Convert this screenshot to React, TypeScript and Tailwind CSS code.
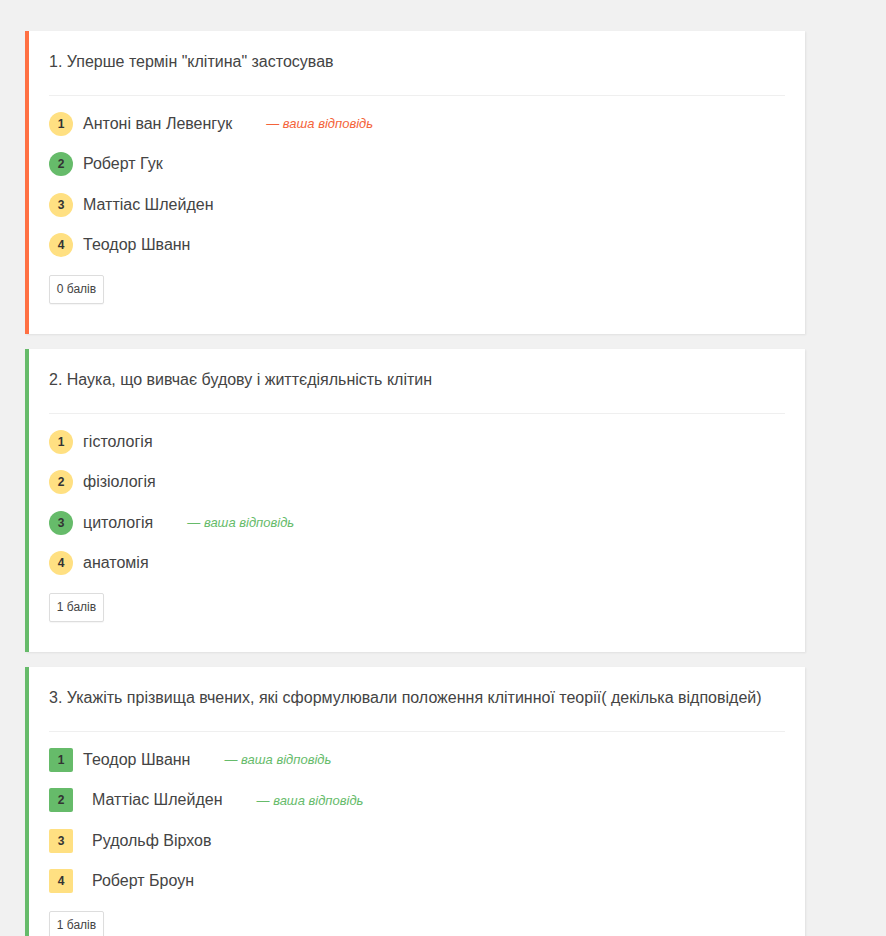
type Mark = 'correct' | 'plain';

interface Option {
  text: string;
  mark: Mark;
  chosen?: boolean;
  indent?: boolean;
}

interface Question {
  title: string;
  status: 'wrong' | 'right';
  shape: 'circle' | 'square';
  options: Option[];
  score: string;
}

const questions: Question[] = [
  {
    title: '1. Уперше термін "клітина" застосував',
    status: 'wrong',
    shape: 'circle',
    score: '0 балів',
    options: [
      { text: 'Антоні ван Левенгук', mark: 'plain', chosen: true },
      { text: 'Роберт Гук', mark: 'correct' },
      { text: 'Маттіас Шлейден', mark: 'plain' },
      { text: 'Теодор Шванн', mark: 'plain' },
    ],
  },
  {
    title: '2. Наука, що вивчає будову і життєдіяльність клітин',
    status: 'right',
    shape: 'circle',
    score: '1 балів',
    options: [
      { text: 'гістологія', mark: 'plain' },
      { text: 'фізіологія', mark: 'plain' },
      { text: 'цитологія', mark: 'correct', chosen: true },
      { text: 'анатомія', mark: 'plain' },
    ],
  },
  {
    title: '3. Укажіть прізвища вчених, які сформулювали положення клітинної теорії( декілька відповідей)',
    status: 'right',
    shape: 'square',
    score: '1 балів',
    options: [
      { text: 'Теодор Шванн', mark: 'correct', chosen: true },
      { text: 'Маттіас Шлейден', mark: 'correct', chosen: true, indent: true },
      { text: 'Рудольф Вірхов', mark: 'plain', indent: true },
      { text: 'Роберт Броун', mark: 'plain', indent: true },
    ],
  },
];

function QuestionCard({ q }: { q: Question }) {
  const wrong = q.status === 'wrong';
  return (
    <div
      className={`w-[780px] bg-white border-l-4 shadow-[1px_1px_2px_rgba(0,0,0,0.07)] pl-5 pr-5 pt-[20px] pb-[30px] ${
        wrong ? 'border-[#ff7043]' : 'border-[#66bb6a]'
      }`}
    >
      <div className="text-[16px] leading-[22px] text-[#444]">{q.title}</div>
      <div className="mt-[22px] h-px bg-[#efefef]" />
      <div className="mt-4 flex flex-col gap-[16.33px]">
        {q.options.map((o, i) => (
          <div key={i} className="flex h-6 items-center">
            <span
              className={`flex h-6 w-6 shrink-0 items-center justify-center text-[12px] font-bold text-[#333] ${
                q.shape === 'circle' ? 'rounded-full' : 'rounded-[2px]'
              } ${o.mark === 'correct' ? 'bg-[#66bb6a]' : 'bg-[#ffe082]'}`}
            >
              {i + 1}
            </span>
            <span className={`text-[16px] text-[#444] ${o.indent ? 'ml-[19px]' : 'ml-[10px]'}`}>{o.text}</span>
            {o.chosen && (
              <span
                className={`ml-[34px] text-[13px] italic ${wrong ? 'text-[#f4633a]' : 'text-[#66bb6a]'}`}
              >
                — ваша відповідь
              </span>
            )}
          </div>
        ))}
      </div>
      <div className="mt-[18px] inline-flex h-[29px] w-[55px] items-center justify-center rounded-[2px] border border-[#ddd] bg-white text-[12px] text-[#444] shadow-[0_1px_1px_rgba(0,0,0,0.04)]">
        {q.score}
      </div>
    </div>
  );
}

export default function App() {
  return (
    <div
      className="min-h-[936px] bg-[#f1f1f1] pl-[25px] pt-[31px]"
      style={{ fontFamily: '"Liberation Sans", Arial, sans-serif' }}
    >
      <div className="flex flex-col gap-[15px]">
        {questions.map((q, i) => (
          <QuestionCard key={i} q={q} />
        ))}
      </div>
    </div>
  );
}
